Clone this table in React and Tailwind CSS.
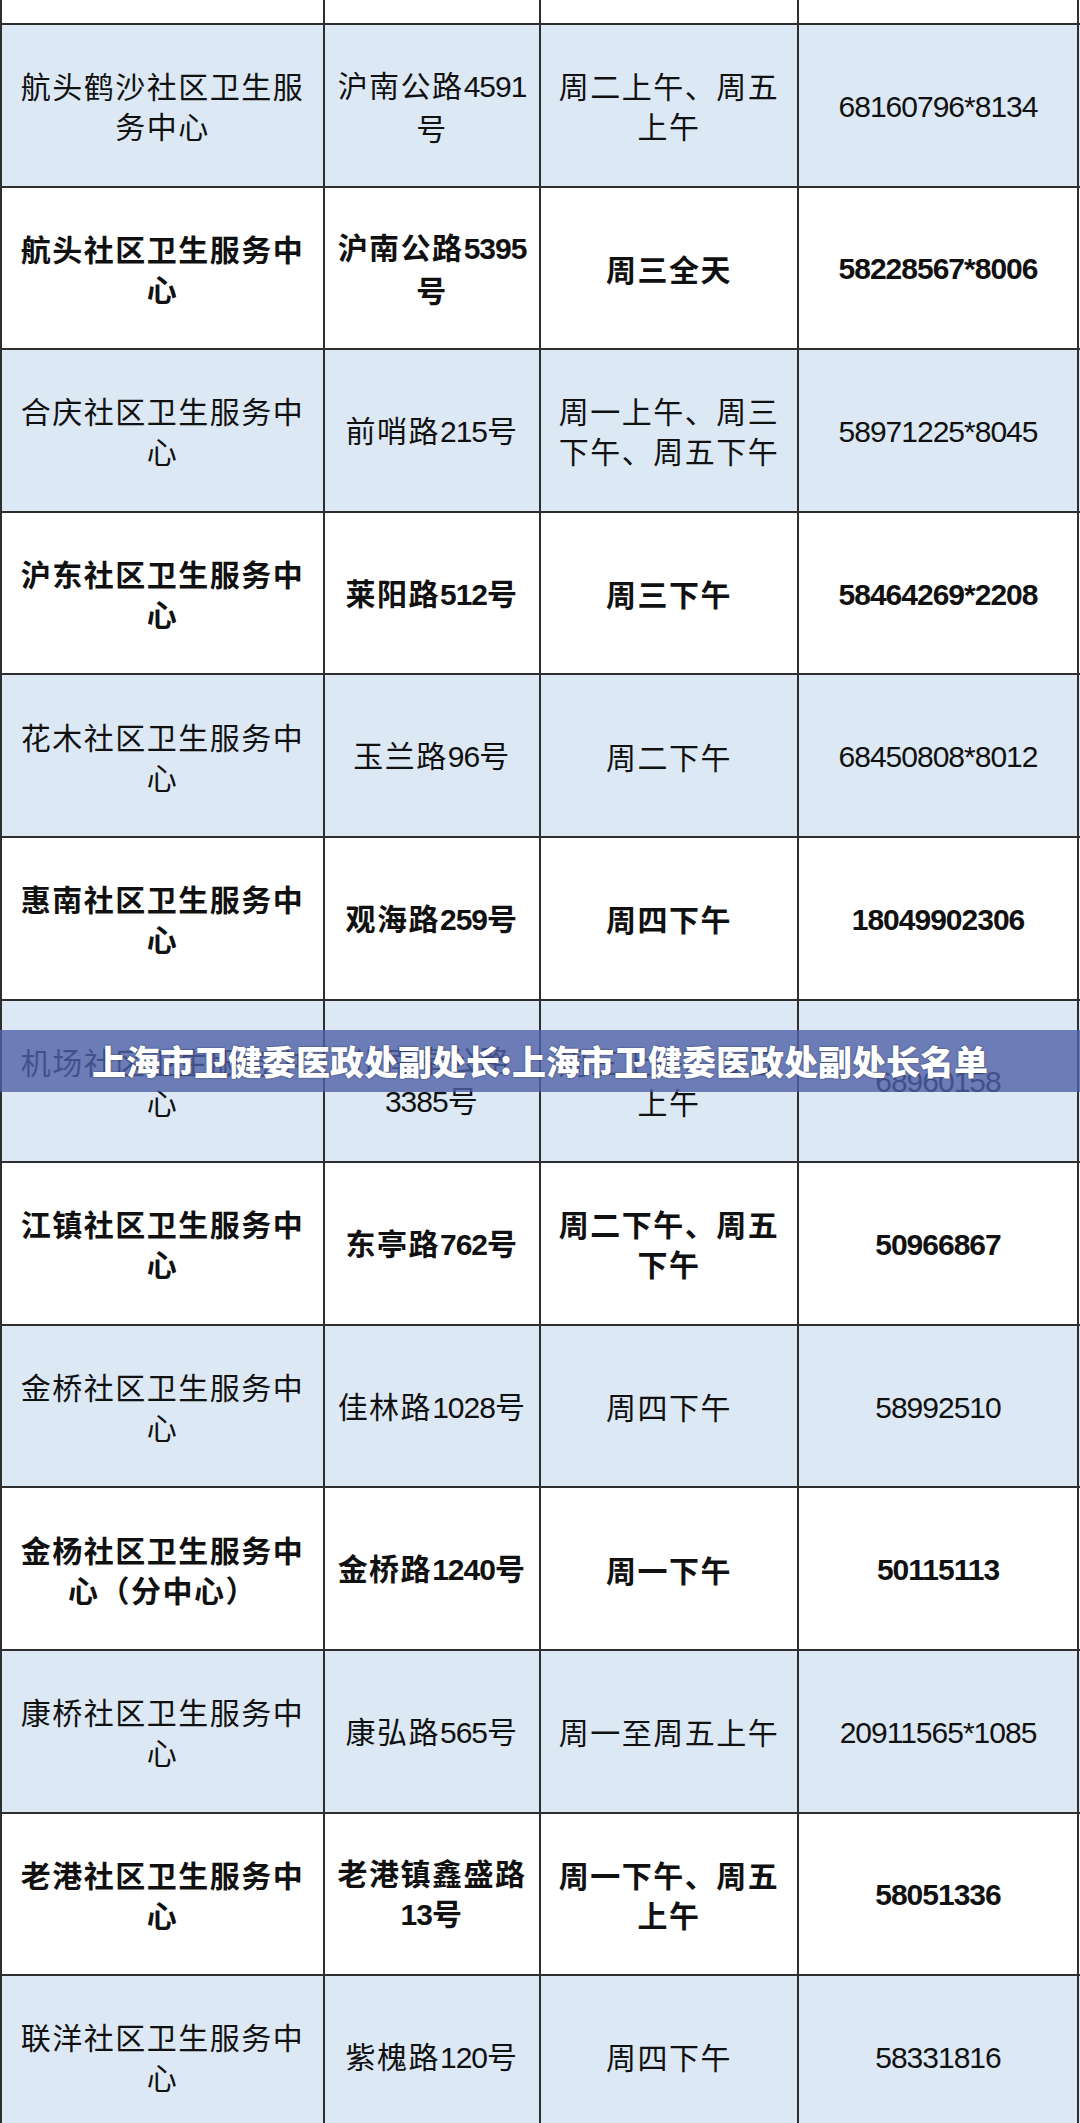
import React from "react";

const rows = [
  { blue: true, bold: false, c: [["航头鹤沙社区卫生服", "务中心"], ["沪南公路4591", "号"], ["周二上午、周五", "上午"], ["68160796*8134"]] },
  { blue: false, bold: true, c: [["航头社区卫生服务中", "心"], ["沪南公路5395", "号"], ["周三全天"], ["58228567*8006"]] },
  { blue: true, bold: false, c: [["合庆社区卫生服务中", "心"], ["前哨路215号"], ["周一上午、周三", "下午、周五下午"], ["58971225*8045"]] },
  { blue: false, bold: true, c: [["沪东社区卫生服务中", "心"], ["莱阳路512号"], ["周三下午"], ["58464269*2208"]] },
  { blue: true, bold: false, c: [["花木社区卫生服务中", "心"], ["玉兰路96号"], ["周二下午"], ["68450808*8012"]] },
  { blue: false, bold: true, c: [["惠南社区卫生服务中", "心"], ["观海路259号"], ["周四下午"], ["18049902306"]] },
  { blue: true, bold: false, c: [["机场社区卫生服务中", "心"], ["川南奉公路", "3385号"], ["周三上午、周五", "上午"], ["68960158"]] },
  { blue: false, bold: true, c: [["江镇社区卫生服务中", "心"], ["东亭路762号"], ["周二下午、周五", "下午"], ["50966867"]] },
  { blue: true, bold: false, c: [["金桥社区卫生服务中", "心"], ["佳林路1028号"], ["周四下午"], ["58992510"]] },
  { blue: false, bold: true, c: [["金杨社区卫生服务中", "心（分中心）"], ["金桥路1240号"], ["周一下午"], ["50115113"]] },
  { blue: true, bold: false, c: [["康桥社区卫生服务中", "心"], ["康弘路565号"], ["周一至周五上午"], ["20911565*1085"]] },
  { blue: false, bold: true, c: [["老港社区卫生服务中", "心"], ["老港镇鑫盛路", "13号"], ["周一下午、周五", "上午"], ["58051336"]] },
  { blue: true, bold: false, c: [["联洋社区卫生服务中", "心"], ["紫槐路120号"], ["周四下午"], ["58331816"]] },
];

const widths = ["w-[325px] border-l-2", "w-[216px]", "w-[258px]", "w-[280px]"];

function Segs({ text }) {
  const parts = text.match(/[\x20-\x7e]+|[^\x20-\x7e]+/g) || [];
  return parts.map((p, i) =>
    /^[\x20-\x7e]+$/.test(p) ? (
      <span key={i} className="font-['Liberation_Sans'] tracking-[-1px]">
        {p}
      </span>
    ) : (
      <span key={i}>{p}</span>
    )
  );
}

function Row({ r }) {
  return (
    <div className={`flex h-[162.6px] border-b-2 border-[#2e2e2e] ${r.blue ? "bg-[#dce8f4]" : "bg-white"}`}>
      {r.c.map((lines, i) => (
        <div
          key={i}
          className={`${widths[i]} shrink-0 border-r-2 border-[#2e2e2e] flex flex-col items-center justify-center text-center whitespace-nowrap`}
        >
          {lines.map((l, j) => (
            <div key={j} className="leading-[40px]">
              <Segs text={l} />
            </div>
          ))}
        </div>
      ))}
    </div>
  );
}

export default function App() {
  return (
    <div className="relative w-[1080px] h-[2123px] overflow-hidden bg-white text-[#111] text-[30px] tracking-[1.5px] font-['Noto_Sans_CJK_SC',sans-serif]">
      <div className="flex h-[25px] border-b-2 border-[#2e2e2e] bg-white">
        {widths.map((w, i) => (
          <div key={i} className={`${w} shrink-0 border-r-2 border-[#2e2e2e]`} />
        ))}
      </div>
      {rows.map((r, i) => (
        <div key={i} className={r.bold ? "font-bold" : "font-normal"}>
          <Row r={r} />
        </div>
      ))}
      <div className="absolute left-0 top-[1030px] w-full h-[62px] bg-[rgba(79,96,167,0.8)] flex items-center justify-center">
        <span className="text-white font-black text-[34px] tracking-[0px] leading-none [text-shadow:0_0_2px_rgba(0,0,0,0.55)]">
          上海市卫健委医政处副处长:上海市卫健委医政处副处长名单
        </span>
      </div>
    </div>
  );
}
